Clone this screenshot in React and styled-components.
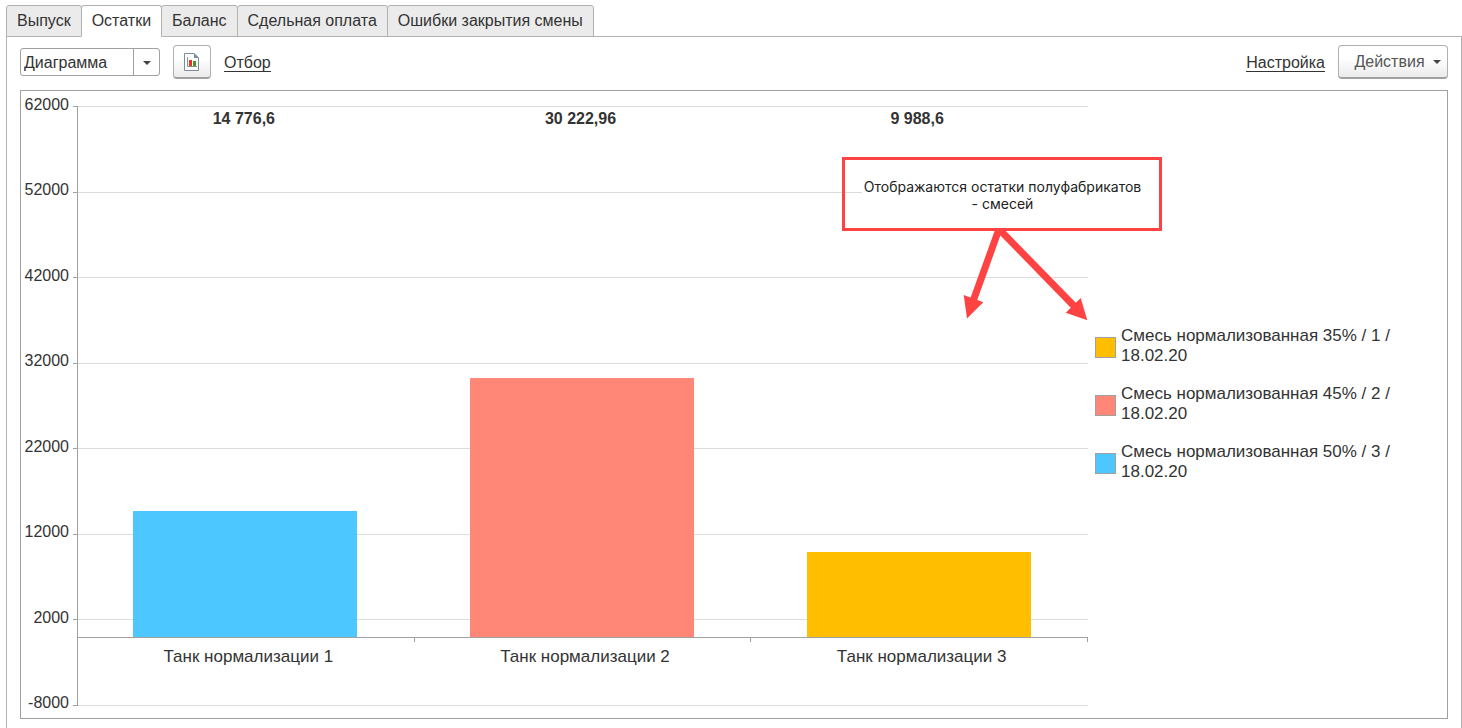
import React from "react";
import styled, { createGlobalStyle } from "styled-components";

const GlobalStyle = createGlobalStyle`
  *, *::before, *::after { box-sizing: border-box; }
  body {
    margin: 0;
    background: #fff;
    color: #333;
    font: 16px/20px "Liberation Sans", Arial, sans-serif;
  }
`;

const Page = styled.div`
  display: flex;
  flex-direction: column;
  min-height: 100vh;
  padding: 5px 0 0 6px;
`;

const Tabs = styled.div`
  display: flex;
`;

const Tab = styled.button`
  height: 32px;
  margin: 0 -1px -1px 0;
  padding: 0 10px;
  border: 1px solid #b2b2b2;
  border-bottom-color: ${(p) => (p.$active ? "#fff" : "#b2b2b2")};
  border-radius: 3px 3px 0 0;
  background: ${(p) => (p.$active ? "#fff" : "#ebebeb")};
  color: #333;
  font: inherit;
  white-space: nowrap;
  position: relative;
`;

const Panel = styled.main`
  flex: 1;
  display: flex;
  flex-direction: column;
  gap: 11px;
  padding: 8px 13px 9px;
  border: 1px solid #b2b2b2;
  border-bottom: 0;
`;

const Toolbar = styled.div`
  display: flex;
  align-items: center;
  height: 34px;
  gap: 13px;
`;

const Spacer = styled.div`
  flex: 1;
`;

const SelectBox = styled.label`
  display: grid;
  grid-template-columns: 1fr 26px;
  width: 140px;
  height: 28px;
  border: 1px solid #a0a0a0;
  border-radius: 3px;
`;

const Select = styled.select`
  grid-area: 1 / 1 / 2 / 3;
  appearance: none;
  padding: 1px 26px 0 3px;
  border: 0;
  background: transparent;
  color: #333;
  font: inherit;
`;

const SelectArrow = styled.span`
  grid-area: 1 / 2;
  display: grid;
  place-items: center;
  padding-top: 2px;
  border-left: 1px solid #a0a0a0;
  pointer-events: none;
`;

const Button = styled.button`
  display: flex;
  align-items: center;
  justify-content: center;
  gap: 8px;
  width: ${(p) => (p.$wide ? "110px" : "38px")};
  height: 34px;
  padding: ${(p) => (p.$wide ? "0 0 0 9px" : "1px 0 0")};
  border: 1px solid #b0b0b0;
  border-bottom: 2px solid #a0a0a0;
  border-radius: 4px;
  background: linear-gradient(#fff 40%, #ebebeb);
  color: #555;
  font: inherit;
`;

const Link = styled.a`
  padding-top: 1px;
  color: #333;
  line-height: 17px;
  border-bottom: 1px solid #333;
  text-decoration: none;
`;

const Chart = styled.section`
  flex: 1;
  display: flex;
  min-height: 400px;
  padding: 15px 0 12px;
  border: 1px solid #a0a0a0;
  position: relative;
`;

const Plot = styled.div`
  flex: 1;
  display: grid;
  grid-template: minmax(0, 1fr) / 56px minmax(0, 1fr);
`;

const Scale = styled.div`
  grid-area: 1 / 1 / 2 / 3;
  display: flex;
  flex-direction: column;
  justify-content: space-between;
`;

const ScaleRow = styled.div`
  display: flex;
  align-items: center;
  height: 1px;
`;

const ScaleLabel = styled.span`
  width: 48px;
  margin-right: 4px;
  padding-bottom: 4px;
  text-align: right;
`;

const Tick = styled.span`
  width: 4px;
  height: 1px;
  background: #a0a0a0;
`;

const GridLine = styled.span`
  flex: 1;
  height: 1px;
  background: #dcdcdc;
`;

const Series = styled.div`
  grid-area: 1 / 2;
  display: grid;
  grid-template-rows: minmax(0, 62fr) minmax(0, 8fr);
  border-left: 1px solid #a0a0a0;
`;

const Columns = styled.div`
  display: grid;
  grid-template-columns: repeat(3, 1fr);
  grid-template-rows: minmax(0, 1fr);
`;

const Column = styled.div`
  display: grid;
  grid-template: minmax(0, 1fr) / minmax(0, 1fr);
  justify-items: center;
  padding-right: 2px;
`;

const Value = styled.strong`
  grid-area: 1 / 1;
  padding: 3px 3px 0 0;
`;

const Bar = styled.div`
  grid-area: 1 / 1;
  align-self: end;
  width: 67%;
  background: ${(p) => p.$color};
`;

const Categories = styled(Columns)`
  border-top: 1px solid #a0a0a0;
`;

const Category = styled.div`
  padding: 9px 0 0 4px;
  font-size: 17px;
  text-align: center;
  background: linear-gradient(#a0a0a0, #a0a0a0) top right / 1px 4px no-repeat;
`;

const Legend = styled.ul`
  display: flex;
  flex-direction: column;
  justify-content: center;
  gap: 18px;
  width: 359px;
  margin: 0;
  padding: 0 40px 4px 7px;
  font-size: 17px;
  list-style: none;
`;

const LegendItem = styled.li`
  display: flex;
  align-items: center;
  gap: 5px;
`;

const Swatch = styled.span`
  flex: none;
  width: 21px;
  height: 21px;
  margin-top: 3px;
  border: 1px solid #a0a0a0;
  background: ${(p) => p.$color};
`;

const Callout = styled.aside`
  position: absolute;
  top: 66px;
  right: 285px;
  width: 320px;
`;

const CalloutBox = styled.div`
  display: grid;
  place-items: center;
  height: 74px;
  border: 3px solid #ff4343;
`;

const CalloutText = styled.p`
  width: 280px;
  margin: 0;
  padding: 4px 0 2px 1px;
  background: #fff;
  color: #222;
  font: 14px/17px Inter, sans-serif;
  text-align: center;
`;

const Arrows = styled.svg`
  display: block;
  margin-left: 120px;
`;

const tabs = ["Выпуск", "Остатки", "Баланс", "Сдельная оплата", "Ошибки закрытия смены"];
const scale = [62000, 52000, 42000, 32000, 22000, 12000, 2000, -8000];
const bars = [
  { name: "Танк нормализации 1", value: 14776.6, label: "14 776,6", color: "#4dc7ff" },
  { name: "Танк нормализации 2", value: 30222.96, label: "30 222,96", color: "#ff8778" },
  { name: "Танк нормализации 3", value: 9988.6, label: "9 988,6", color: "#ffbf00" },
];
const legend = [
  { text: "Смесь нормализованная 35% / 1 / 18.02.20", color: "#ffbf00" },
  { text: "Смесь нормализованная 45% / 2 / 18.02.20", color: "#ff8778" },
  { text: "Смесь нормализованная 50% / 3 / 18.02.20", color: "#4dc7ff" },
];

const Caret = () => (
  <svg width="8" height="4" viewBox="0 0 8 4" aria-hidden="true">
    <path d="M0 0h8L4 4z" fill="#444" />
  </svg>
);

const ReportIcon = () => (
  <svg width="16" height="18" viewBox="0 0 16 18" aria-hidden="true">
    <path d="M.5.5H10l4.500 4.500v12.500H.5z" fill="#fff" stroke="#7b8d98" />
    <path d="M10 0l5 5h-5z" fill="#7b8d98" />
    <path d="M3.500 4v9.500H13" fill="none" stroke="#8a9298" />
    <path d="M5 7h3v6H5z" fill="#f03022" />
    <path d="M9 8h3v5H9z" fill="#3f9a2a" />
  </svg>
);

export default function App() {
  return (
    <>
      <GlobalStyle />
      <Page>
        <Tabs role="tablist">
          {tabs.map((name, i) => (
            <Tab key={name} role="tab" aria-selected={i === 1} $active={i === 1}>
              {name}
            </Tab>
          ))}
        </Tabs>
        <Panel>
          <Toolbar>
            <SelectBox>
              <Select aria-label="Вид отчета" defaultValue="Диаграмма">
                <option>Диаграмма</option>
              </Select>
              <SelectArrow>
                <Caret />
              </SelectArrow>
            </SelectBox>
            <Button aria-label="Отчет">
              <ReportIcon />
            </Button>
            <Link href="#filter">Отбор</Link>
            <Spacer />
            <Link href="#settings">Настройка</Link>
            <Button $wide>
              Действия
              <Caret />
            </Button>
          </Toolbar>
          <Chart>
            <Plot>
              <Scale>
                {scale.map((n) => (
                  <ScaleRow key={n}>
                    <ScaleLabel>{n}</ScaleLabel>
                    <Tick />
                    <GridLine />
                  </ScaleRow>
                ))}
              </Scale>
              <Series>
                <Columns>
                  {bars.map((b) => (
                    <Column key={b.name}>
                      <Bar $color={b.color} style={{ height: `${(b.value / 62000) * 100}%` }} />
                      <Value>{b.label}</Value>
                    </Column>
                  ))}
                </Columns>
                <Categories>
                  {bars.map((b) => (
                    <Category key={b.name}>{b.name}</Category>
                  ))}
                </Categories>
              </Series>
            </Plot>
            <Legend>
              {legend.map((l) => (
                <LegendItem key={l.text}>
                  <Swatch $color={l.color} />
                  <span>{l.text}</span>
                </LegendItem>
              ))}
            </Legend>
            <Callout>
              <CalloutBox>
                <CalloutText>Отображаются остатки полуфабрикатов - смесей</CalloutText>
              </CalloutBox>
              <Arrows width="126" height="90" viewBox="0 0 126 90" aria-hidden="true">
                <path d="M37-2L11.5 69M37-2l75 77" fill="none" stroke="#ff4343" strokeWidth="7" />
                <path d="M1.7 64l19.6 7.3L5 87.5zM118.7 67l-15 14.7 21.6 7.5z" fill="#ff4343" />
              </Arrows>
            </Callout>
          </Chart>
        </Panel>
      </Page>
    </>
  );
}
